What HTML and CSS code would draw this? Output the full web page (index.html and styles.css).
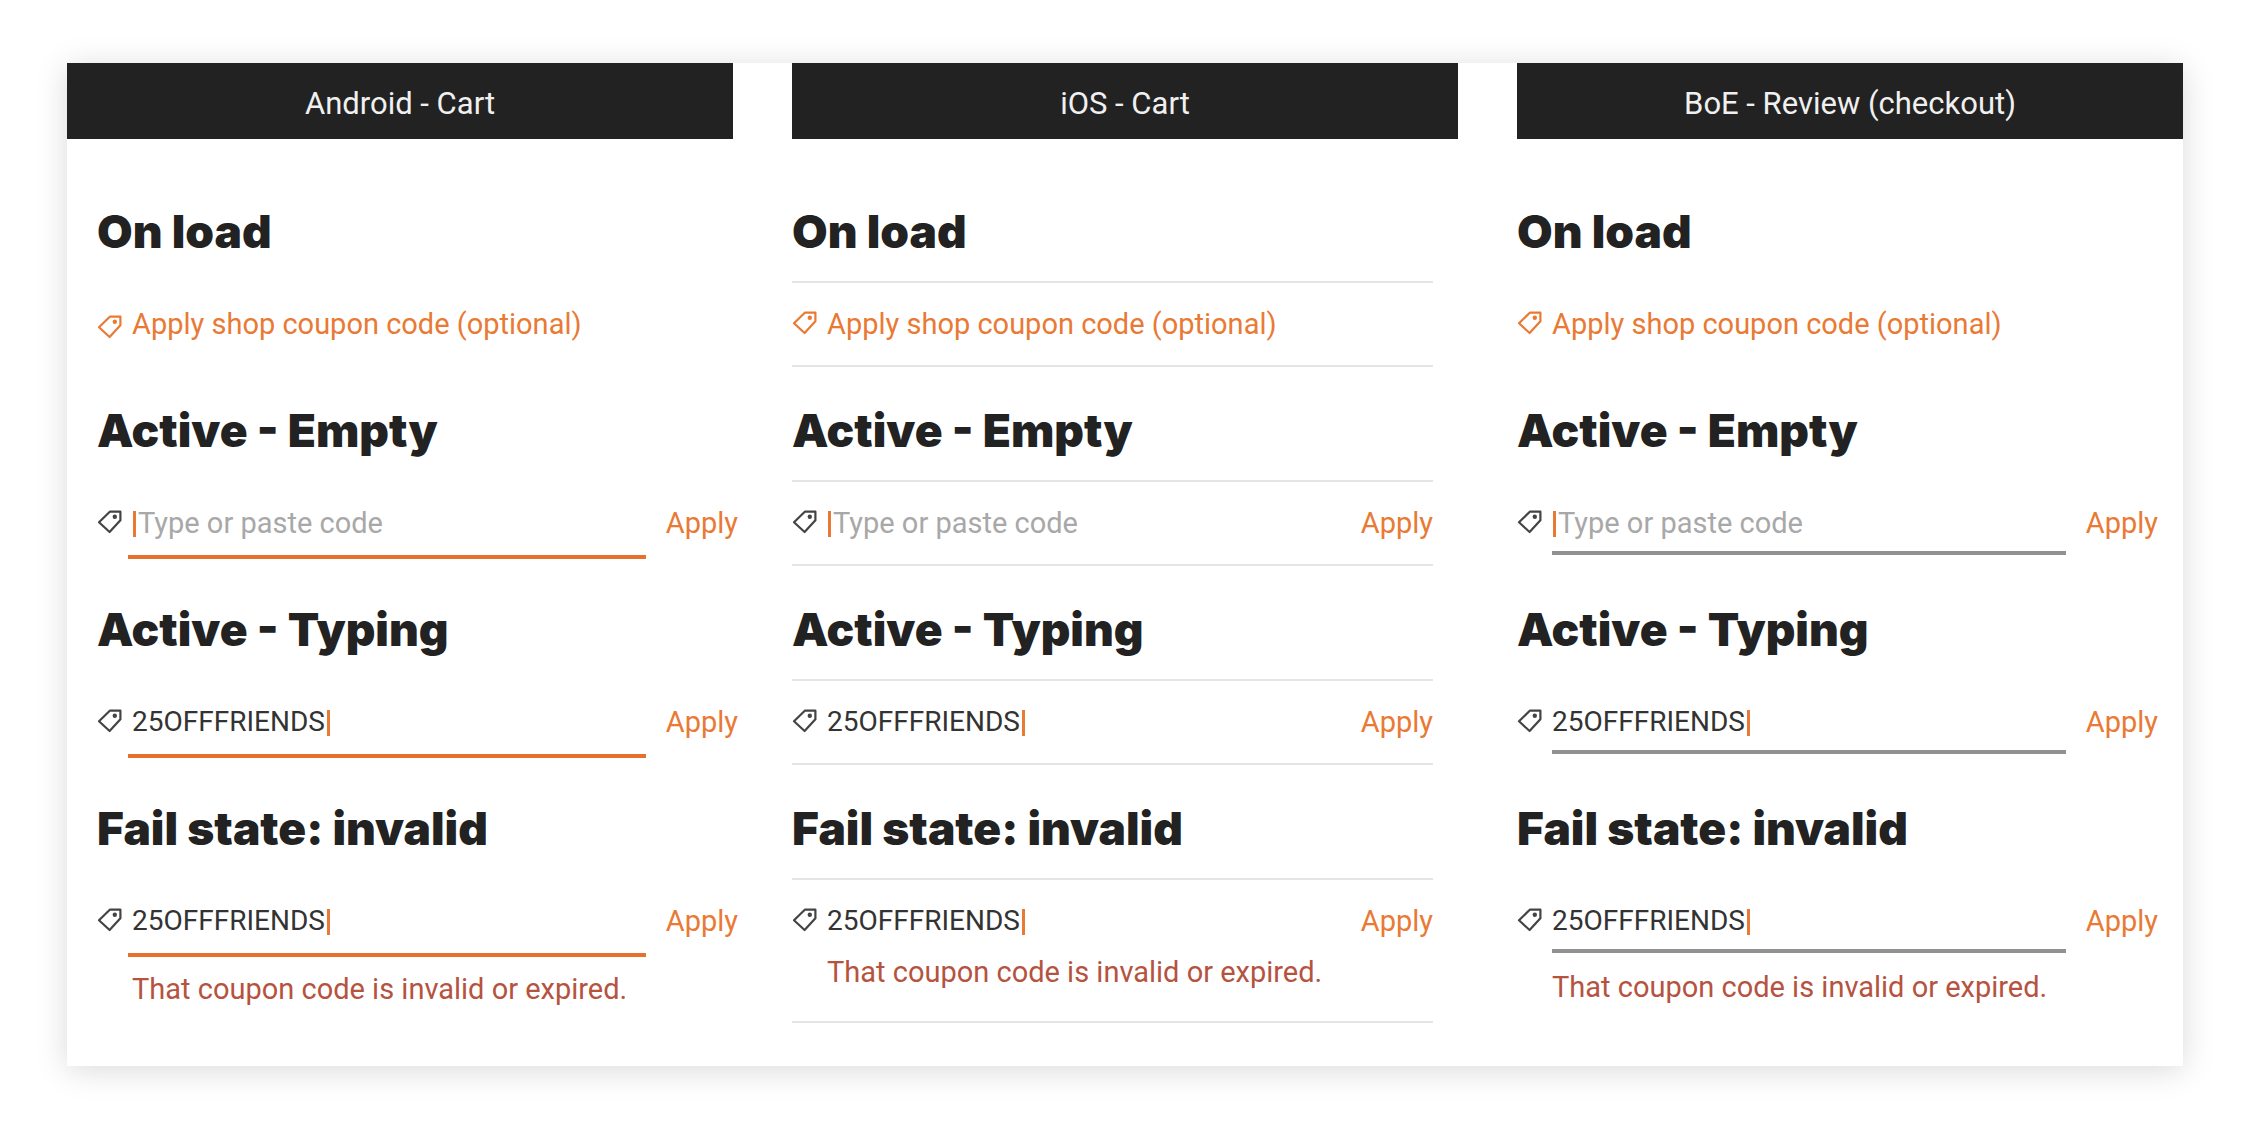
FILE: index.html
```html
<!DOCTYPE html>
<html lang="en">
<head>
  <meta charset="UTF-8">
  <meta name="viewport" content="width=device-width, initial-scale=1.0">
  <title>Coupon code states</title>
  <link rel="stylesheet" href="styles.css">
</head>
<body>
  <svg class="sprite" aria-hidden="true">
    <symbol id="tag" viewBox="0 0 25 24">
      <path d="M12.8 1.7H23.4V10.2L12.6 22L2 12.3Z" fill="none" stroke="currentColor" stroke-width="2.2" stroke-linejoin="round"/>
      <circle cx="17.8" cy="6.8" r="2.2" fill="currentColor"/>
    </symbol>
  </svg>

  <main class="board">
    <section class="platform android">
      <h1>Android - Cart</h1>
      <div class="states">
        <div class="state">
          <h2>On load</h2>
          <div class="coupon">
            <a class="row coupon-link" href="#"><svg class="tag"><use href="#tag"/></svg>Apply shop coupon code (optional)</a>
          </div>
        </div>
        <div class="state">
          <h2>Active - Empty</h2>
          <form class="coupon">
            <div class="row">
              <label for="android-empty"><svg class="tag"><use href="#tag"/></svg></label>
              <div class="field">
                <span class="caret"></span>
                <input class="empty" id="android-empty" type="text" placeholder="Type or paste code" aria-label="Coupon code">
              </div>
              <button type="button">Apply</button>
            </div>
          </form>
        </div>
        <div class="state">
          <h2>Active - Typing</h2>
          <form class="coupon">
            <div class="row">
              <label for="android-typing"><svg class="tag"><use href="#tag"/></svg></label>
              <div class="field">
                <input class="typed" id="android-typing" type="text" value="25OFFFRIENDS" aria-label="Coupon code">
                <span class="caret"></span>
              </div>
              <button type="button">Apply</button>
            </div>
          </form>
        </div>
        <div class="state">
          <h2>Fail state: invalid</h2>
          <form class="coupon">
            <div class="row">
              <label for="android-invalid"><svg class="tag"><use href="#tag"/></svg></label>
              <div class="field">
                <input class="typed" id="android-invalid" type="text" value="25OFFFRIENDS" aria-label="Coupon code">
                <span class="caret"></span>
              </div>
              <button type="button">Apply</button>
            </div>
            <p class="error">That coupon code is invalid or expired.</p>
          </form>
        </div>
      </div>
    </section>

    <section class="platform ios">
      <h1>iOS - Cart</h1>
      <div class="states">
        <div class="state">
          <h2>On load</h2>
          <div class="coupon">
            <a class="row coupon-link" href="#"><svg class="tag"><use href="#tag"/></svg>Apply shop coupon code (optional)</a>
          </div>
        </div>
        <div class="state">
          <h2>Active - Empty</h2>
          <form class="coupon">
            <div class="row">
              <label for="ios-empty"><svg class="tag"><use href="#tag"/></svg></label>
              <div class="field">
                <span class="caret"></span>
                <input class="empty" id="ios-empty" type="text" placeholder="Type or paste code" aria-label="Coupon code">
              </div>
              <button type="button">Apply</button>
            </div>
          </form>
        </div>
        <div class="state">
          <h2>Active - Typing</h2>
          <form class="coupon">
            <div class="row">
              <label for="ios-typing"><svg class="tag"><use href="#tag"/></svg></label>
              <div class="field">
                <input class="typed" id="ios-typing" type="text" value="25OFFFRIENDS" aria-label="Coupon code">
                <span class="caret"></span>
              </div>
              <button type="button">Apply</button>
            </div>
          </form>
        </div>
        <div class="state">
          <h2>Fail state: invalid</h2>
          <form class="coupon">
            <div class="row">
              <label for="ios-invalid"><svg class="tag"><use href="#tag"/></svg></label>
              <div class="field">
                <input class="typed" id="ios-invalid" type="text" value="25OFFFRIENDS" aria-label="Coupon code">
                <span class="caret"></span>
              </div>
              <button type="button">Apply</button>
            </div>
            <p class="error">That coupon code is invalid or expired.</p>
          </form>
        </div>
      </div>
    </section>

    <section class="platform boe">
      <h1>BoE - Review (checkout)</h1>
      <div class="states">
        <div class="state">
          <h2>On load</h2>
          <div class="coupon">
            <a class="row coupon-link" href="#"><svg class="tag"><use href="#tag"/></svg>Apply shop coupon code (optional)</a>
          </div>
        </div>
        <div class="state">
          <h2>Active - Empty</h2>
          <form class="coupon">
            <div class="row">
              <label for="boe-empty"><svg class="tag"><use href="#tag"/></svg></label>
              <div class="field">
                <span class="caret"></span>
                <input class="empty" id="boe-empty" type="text" placeholder="Type or paste code" aria-label="Coupon code">
              </div>
              <button type="button">Apply</button>
            </div>
          </form>
        </div>
        <div class="state">
          <h2>Active - Typing</h2>
          <form class="coupon">
            <div class="row">
              <label for="boe-typing"><svg class="tag"><use href="#tag"/></svg></label>
              <div class="field">
                <input class="typed" id="boe-typing" type="text" value="25OFFFRIENDS" aria-label="Coupon code">
                <span class="caret"></span>
              </div>
              <button type="button">Apply</button>
            </div>
          </form>
        </div>
        <div class="state">
          <h2>Fail state: invalid</h2>
          <form class="coupon">
            <div class="row">
              <label for="boe-invalid"><svg class="tag"><use href="#tag"/></svg></label>
              <div class="field">
                <input class="typed" id="boe-invalid" type="text" value="25OFFFRIENDS" aria-label="Coupon code">
                <span class="caret"></span>
              </div>
              <button type="button">Apply</button>
            </div>
            <p class="error">That coupon code is invalid or expired.</p>
          </form>
        </div>
      </div>
    </section>
  </main>
</body>
</html>
```
FILE: styles.css
```css
body {
  margin: 0;
  padding: 63px 61px 70px 67px;
  background-color: #fff;
  color: #222;
  font-family: Roboto, sans-serif;
  font-size: 29px;
  line-height: 34px;
}
.sprite {
  display: none;
}
.board {
  display: grid;
  grid-template-columns: repeat(3, 1fr);
  column-gap: 59px;
  padding-bottom: 43px;
  background-color: #fff;
  box-shadow: 0 4px 30px rgba(0, 0, 0, 0.15);
}
h1 {
  margin: 0;
  padding: 24px 0 18px;
  background-color: #222;
  color: #f0f0f0;
  font-size: 31px;
  font-weight: 400;
  line-height: 34px;
  text-align: center;
}
h2 {
  margin: 0 0 22px;
  font-family: Inter, sans-serif;
  font-size: 46px;
  font-weight: 900;
  line-height: 56px;
}
.states {
  display: flex;
  flex-direction: column;
  gap: 35px;
  margin-right: 25px;
  padding-top: 64px;
}
.coupon {
  box-sizing: border-box;
  min-height: 86px;
  border-top: 2px solid transparent;
  padding-top: 24px;
}
.row {
  display: flex;
  align-items: flex-start;
}
.tag {
  display: block;
  flex: none;
  width: 25px;
  height: 24px;
  margin: 4px 10px 0 0;
}
label {
  color: #444;
}
.coupon-link {
  color: #e97a35;
  text-decoration: none;
}
.field {
  display: flex;
  flex: 1;
  min-width: 0;
}
input {
  min-width: 0;
  height: 34px;
  border: none;
  padding: 0;
  background: none;
  color: #333;
  font: inherit;
  outline: none;
}
input::placeholder {
  color: #a8a8a8;
  opacity: 1;
}
.empty {
  flex: 1;
}
.typed {
  field-sizing: content;
  font-size: 28px;
}
.caret {
  width: 3px;
  height: 26px;
  margin: 5px 2px 0 1px;
  background-color: #e97a35;
}
.typed + .caret {
  margin-left: 2px;
}
button {
  margin-left: 20px;
  border: none;
  padding: 0;
  background: none;
  color: #e97a35;
  font: inherit;
  cursor: pointer;
}
.error {
  margin: 17px 0 0 35px;
  color: #b5533f;
}

/* Android: content is indented, orange underline */
.android .states {
  margin: 0 -5px 0 30px;
}
.android .coupon-link .tag {
  margin-top: 8px;
}
.android label .tag {
  margin-right: 6px;
}
.android .field {
  border-bottom: 4px solid #e5712d;
  padding: 0 0 15px 4px;
}
.android .error {
  margin-top: 15px;
}

/* iOS: rules above and below each row */
.ios .coupon {
  border-top-color: #e5e5e5;
  border-bottom: 2px solid #e5e5e5;
}
.ios .error {
  padding-bottom: 32px;
}

/* BoE: grey underline */
.boe .field {
  border-bottom: 4px solid #919191;
  padding-bottom: 11px;
}
```
